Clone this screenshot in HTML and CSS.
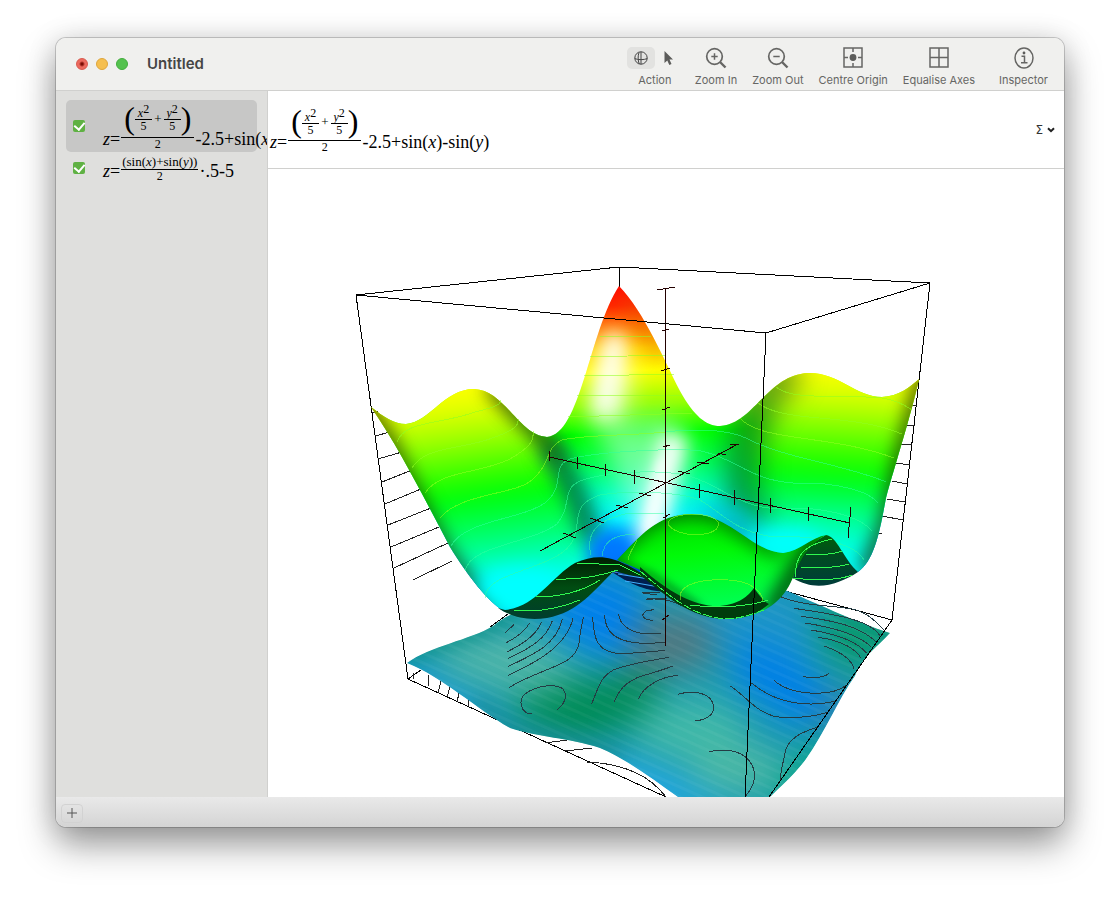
FILE: index.html
```html
<!DOCTYPE html>
<html lang="en">
<head>
<meta charset="utf-8">
<title>Untitled</title>
<link rel="stylesheet" href="styles.css">
</head>
<body>
<div class="window">
  <header class="titlebar">
    <div class="lights">
      <button class="light light-close" aria-label="Close"></button>
      <button class="light light-min" aria-label="Minimise"></button>
      <button class="light light-max" aria-label="Full screen"></button>
    </div>
    <h1 class="title">Untitled</h1>
    <div class="toolbar">
      <div class="tool tool-action">
        <div class="segments">
          <button class="segment segment-on" aria-label="Rotate">
            <svg width="16" height="16" viewBox="0 0 16 16"><circle cx="8" cy="8" r="6.2"/><path d="M1.8 8.6C5 10 11 10 14.2 8.6M8 1.8V14.2M6 2.5C4.8 6 4.8 10 6.2 14"/></svg>
          </button>
          <button class="segment" aria-label="Select">
            <svg width="16" height="16" viewBox="0 0 16 16"><path class="solid" d="M3.5 1V13L6.3 10.4L8.3 15L10.5 14L8.5 9.6H12Z"/></svg>
          </button>
        </div>
        <span>Action</span>
      </div>
      <button class="tool">
        <svg width="22" height="22" viewBox="0 0 22 22"><circle cx="9.500" cy="9.500" r="7.800" stroke-width="1.700"/><path d="M9.500 6.300V12.700M6.300 9.500H12.700" stroke-width="1.500"/><path d="M15 15L20.500 20.500" stroke-width="2.400"/></svg>
        <span>Zoom In</span>
      </button>
      <button class="tool">
        <svg width="22" height="22" viewBox="0 0 22 22"><circle cx="9.500" cy="9.500" r="7.800" stroke-width="1.700"/><path d="M6.300 9.500H12.700" stroke-width="1.500"/><path d="M15 15L20.500 20.500" stroke-width="2.400"/></svg>
        <span>Zoom Out</span>
      </button>
      <button class="tool">
        <svg width="22" height="22" viewBox="0 0 22 22"><rect x="2" y="1" width="18" height="19" stroke-width="1.500"/><path d="M11 1V5M11 16V20M2 10.500H6M16 10.500H20" stroke-width="1.500"/><circle class="solid" cx="11" cy="10.500" r="3.400"/></svg>
        <span>Centre Origin</span>
      </button>
      <button class="tool">
        <svg width="22" height="22" viewBox="0 0 22 22"><path d="M2 1H20V20H2ZM11 1V20M2 10.500H20" stroke-width="1.500"/></svg>
        <span>Equalise Axes</span>
      </button>
      <button class="tool tool-last">
        <svg width="22" height="22" viewBox="0 0 22 22"><ellipse cx="11" cy="11" rx="9" ry="10" stroke-width="1.500"/><circle class="solid" cx="11" cy="6" r="1.400"/><path d="M8.500 9.300H11.500V15.500M8 15.800H14.500" stroke-width="1.500"/></svg>
        <span>Inspector</span>
      </button>
    </div>
  </header>

  <div class="body">
    <aside class="sidebar">
      <ul class="equations">
        <li class="equation equation-on">
          <input class="tick" type="checkbox" checked aria-labelledby="eq1">
          <div class="formula" id="eq1"><span class="run"><i>z</i>=</span><span class="frac"><span class="num num-tall"><span class="paren">(</span><span class="frac small"><span class="num"><i>x</i><sup>2</sup></span><span class="den">5</span></span><span class="plus">+</span><span class="frac small"><span class="num"><i>y</i><sup>2</sup></span><span class="den">5</span></span><span class="paren">)</span></span><span class="den">2</span></span><span class="run">-2.5+sin(<i>x</i>)-sin(<i>y</i>)</span></div>
        </li>
        <li class="equation">
          <input class="tick" type="checkbox" checked aria-labelledby="eq2">
          <div class="formula" id="eq2"><span class="run"><i>z</i>=</span><span class="frac"><span class="num">(sin(<i>x</i>)+sin(<i>y</i>))</span><span class="den">2</span></span><span class="run">·.5-5</span></div>
        </li>
      </ul>
    </aside>

    <main class="content">
      <div class="editor">
        <div class="formula"><span class="run"><i>z</i>=</span><span class="frac"><span class="num num-tall"><span class="paren">(</span><span class="frac small"><span class="num"><i>x</i><sup>2</sup></span><span class="den">5</span></span><span class="plus">+</span><span class="frac small"><span class="num"><i>y</i><sup>2</sup></span><span class="den">5</span></span><span class="paren">)</span></span><span class="den">2</span></span><span class="run">-2.5+sin(<i>x</i>)-sin(<i>y</i>)</span></div>
        <button class="symbols" aria-label="Symbols"><span>Σ</span><svg width="8" height="6" viewBox="0 0 8 6"><path d="M1 1.200L4 4.200L7 1.200"/></svg></button>
      </div>

      <div class="plot">
      <svg class="graph" viewBox="268 169 796 628" preserveAspectRatio="xMidYMin slice" role="img" aria-label="Surface plot">
        <defs>
          <filter id="b3" filterUnits="userSpaceOnUse" x="268" y="169" width="796" height="700"><feGaussianBlur stdDeviation="4"/></filter>
          <filter id="b8" filterUnits="userSpaceOnUse" x="268" y="169" width="796" height="700"><feGaussianBlur stdDeviation="9"/></filter>
          <filter id="b12" filterUnits="userSpaceOnUse" x="268" y="169" width="796" height="700"><feGaussianBlur stdDeviation="13"/></filter>
          <filter id="b16" filterUnits="userSpaceOnUse" x="268" y="169" width="796" height="700"><feGaussianBlur stdDeviation="17"/></filter>
          <linearGradient id="gl" gradientUnits="userSpaceOnUse" x1="470" y1="385" x2="496" y2="605">
            <stop offset="0" stop-color="#ffff00"/><stop offset=".1" stop-color="#e4ff00"/><stop offset=".24" stop-color="#9cff00"/><stop offset=".4" stop-color="#38ff00"/><stop offset=".5" stop-color="#00ff08"/><stop offset=".7" stop-color="#00ff78"/><stop offset=".88" stop-color="#00ffe8"/><stop offset="1" stop-color="#00ffff"/>
          </linearGradient>
          <linearGradient id="gc" gradientUnits="userSpaceOnUse" x1="614" y1="286" x2="625" y2="570">
            <stop offset="0" stop-color="#ff0a00"/><stop offset=".07" stop-color="#ff2800"/><stop offset=".15" stop-color="#ff8000"/><stop offset=".22" stop-color="#ffd200"/><stop offset=".3" stop-color="#ffff00"/><stop offset=".42" stop-color="#90ff00"/><stop offset=".52" stop-color="#00ff00"/><stop offset=".64" stop-color="#00ff60"/><stop offset=".74" stop-color="#00ffc8"/><stop offset=".82" stop-color="#00f4ff"/><stop offset=".92" stop-color="#008cff"/><stop offset="1" stop-color="#0040d0"/>
          </linearGradient>
          <linearGradient id="gr" gradientUnits="userSpaceOnUse" x1="825" y1="372" x2="815" y2="562">
            <stop offset="0" stop-color="#ffff00"/><stop offset=".14" stop-color="#d0ff00"/><stop offset=".32" stop-color="#70ff00"/><stop offset=".53" stop-color="#00ff00"/><stop offset=".68" stop-color="#00ff60"/><stop offset=".85" stop-color="#00ffc8"/><stop offset="1" stop-color="#00ffff"/>
          </linearGradient>
          <linearGradient id="gh" gradientUnits="userSpaceOnUse" x1="690" y1="514" x2="700" y2="612">
            <stop offset="0" stop-color="#00d000"/><stop offset=".15" stop-color="#00e800"/><stop offset=".4" stop-color="#00fa08"/><stop offset="1" stop-color="#00ff58"/>
          </linearGradient>
          <linearGradient id="gd" gradientUnits="userSpaceOnUse" x1="0" y1="556" x2="0" y2="620">
            <stop offset="0" stop-color="#001c00"/><stop offset=".5" stop-color="#004d12"/><stop offset="1" stop-color="#003c30"/>
          </linearGradient>
          <linearGradient id="gk" gradientUnits="userSpaceOnUse" x1="0" y1="535" x2="0" y2="588">
            <stop offset="0" stop-color="#006008"/><stop offset=".4" stop-color="#004c20"/><stop offset="1" stop-color="#003a3c"/>
          </linearGradient>
          <path id="back" d="M371 407C384 417 394 424 406 424C430 422 444 389 474 389C505 390 519 436 547 437C581 434 589 332 619 286C645 313 664 360 680 391C694 416 706 426 720 426C754 424 767 375 808 373C838 372 856 397 882 397C899 396 910 387 919 379C912 412 895 465 886 498C880 530 875 560 858 572L826 553L740 600L614 572L505 612C488 602 468 576 450 547C425 500 400 449 371 407Z"/>
          <clipPath id="backclip"><use href="#back"/></clipPath>
          <path id="floor" d="M407 663C430 646 470 640 493 626C500 620 506 617 512 614L600 580L614 572L660 590L785 590C810 600 855 622 890 633C876 648 862 657 855 676C838 700 825 732 806 759C795 774 780 787 770 797H678C655 781 630 761 600 748C567 737 540 738 510 728C475 708 444 678 407 663Z"/>
          <clipPath id="floorclip"><use href="#floor"/></clipPath>
          <path id="hump" d="M617 560C640 536 657 514 692 514C731 515 753 552 783 553C800 551 812 537 826 535C800 550 798 570 789 586C780 602 763 617 728 619C687 616 664 588 640 570Z"/>
          <clipPath id="humpclip"><use href="#hump"/></clipPath>
          <pattern id="facets" width="18" height="9" patternUnits="userSpaceOnUse" patternTransform="rotate(24)"><rect width="18" height="3" fill="#fff" opacity=".04"/></pattern>
        </defs>

        <g class="box">
          <path d="M356 295L619 267L930 283L766 333"/>
          <path d="M619 267V290M356 295L408 679L666 797M930 283L892 620L785 591M408 679L421 670M490 627L508 614"/>
        </g>
        <g class="stub">
          <path d="M372 413L378 411M375 436L390 432M378 459L402 452M382 482L412 470M385 504L421 489M388 525L431 508M391 547L439 527M394 568L448 543M413 580L452 561"/>
          <path d="M908 405H917M904 425H915M900 444L912 445M896 463L910 465M892 481L907 484M887 499L905 502M882 516L903 520M877 533H882"/>
          <path d="M414 679L413 673M428 686L429 675M438 693L441 681M447 697L450 687M457 702L459 693M468 706L469 700M545 743L567 740M565 751L592 748M587 762C610 763 645 769 666 797"/>
        </g>

        <g clip-path="url(#floorclip)">
          <use href="#floor" fill="#1c9bb0"/>
          <g filter="url(#b16)">
            <path d="M430 640L530 630L590 680L550 705L450 675Z" fill="#4cb4a8"/>
            <path d="M380 670L440 705L500 745" stroke="#1a9ce0" stroke-width="34" fill="none"/>
            <path d="M545 590L620 570L660 625L610 660L565 640Z" fill="#0080ea"/>
            <path d="M640 615H720L710 665L620 680Z" fill="#507880"/>
            <path d="M530 726L500 708L570 680L660 672L655 715L580 745Z" fill="#008c58"/>
            <path d="M690 605L790 590L840 620L800 660L720 640Z" fill="#1c94c8"/>
            <path d="M730 640L790 650L845 705L800 730L735 685Z" fill="#0080e6"/>
            <ellipse cx="690" cy="730" rx="56" ry="30" fill="#40b8a8"/>
            <path d="M570 750L660 770L740 810H640Z" fill="#22a8e8"/>
            <ellipse cx="738" cy="770" rx="48" ry="24" fill="#4cb8a4"/>
            <path d="M810 605L920 618L862 675L825 650Z" fill="#08986c"/>
            <path d="M842 690L822 730" stroke="#3c78a0" stroke-width="20"/>
            <path d="M835 745L785 807" stroke="#00a880" stroke-width="32"/>
          </g>
          <path d="M400 660C430 640 470 636 495 622L520 606" stroke="#088f7c" stroke-opacity=".8" stroke-width="14" fill="none" filter="url(#b8)"/>
          <path d="M475 702L510 730L570 740L620 755" stroke="#188b90" stroke-width="12" fill="none" filter="url(#b8)"/>
          <rect x="400" y="560" width="500" height="240" fill="url(#facets)"/>
        </g>
        <g class="contour" transform="translate(350 500) scale(.33333)">
          <path d="M465 398L493 373M469 428C500 412 525 395 538 370M472 455C515 434 560 405 574 367M474 476C545 442 590 415 607 362M475 499C560 460 620 430 637 358M475 526C570 482 650 435 669 355M478 562C580 500 675 500 687 430C690 400 695 375 700 352M728 350C730 420 745 458 810 461C850 460 880 457 945 451M764 344C764 390 790 432 900 430L945 427M806 342C808 375 845 402 900 402H932M545 642C510 640 505 600 525 582C560 555 620 550 640 568C655 590 640 615 622 629M724 613C745 570 745 535 790 510C840 490 900 482 958 472M793 605C810 560 840 535 900 521C930 512 950 505 970 498M866 596C880 560 930 530 985 526M880 279L920 285M888 298L950 295M912 329L890 332C868 345 880 360 910 361"/>
        </g>
        <g class="contour" transform="translate(640 500) scale(.33333)">
          <path d="M20 297C65 295 100 302 122 316M5 277H60M422 290C490 320 580 315 640 328C690 340 710 370 732 390M462 325C560 340 690 355 720 408M484 349C590 363 660 380 708 425M496 369C600 386 665 410 694 442M513 390C600 404 655 430 680 459M535 412C610 422 650 450 663 475M552 438C600 455 636 475 642 508M489 530C525 535 555 532 566 520M402 541C450 585 570 594 620 555M335 549C400 605 490 625 585 604M271 558C320 590 340 630 405 650C460 656 510 652 560 638M530 682C490 695 440 715 435 760C430 790 422 805 421 840M114 583C155 570 220 575 221 625C220 645 195 663 165 661M207 754L245 751C300 747 344 780 344 830C342 855 330 873 316 889"/>
        </g>

        <g clip-path="url(#backclip)">
          <rect x="360" y="280" width="570" height="340" fill="url(#gc)"/>
          <path d="M340 360H490L545 430L588 520L600 620H340Z" fill="url(#gl)" filter="url(#b8)"/>
          <path d="M775 350H950V610H760L735 500Z" fill="url(#gr)" filter="url(#b12)"/>
          <path d="M548 445L578 495L592 535" stroke="#00906a" stroke-opacity=".6" stroke-width="24" fill="none" filter="url(#b8)"/>
          <path d="M495 386L530 425L560 465L578 503L592 540" stroke="#003820" stroke-opacity=".5" stroke-width="15" fill="none" filter="url(#b8)"/>
          <path d="M488 384L520 415L545 435L562 460" stroke="#102c00" stroke-opacity=".6" stroke-width="12" fill="none" filter="url(#b8)"/>
          <path d="M362 400L388 442L416 500L446 555L490 612" stroke="#1c2c00" stroke-opacity=".75" stroke-width="17" fill="none" filter="url(#b8)"/>
          <path d="M790 364L758 405L744 450L742 495L756 525" stroke="#004c20" stroke-opacity=".5" stroke-width="38" fill="none" filter="url(#b12)"/>
          <path d="M926 372L902 460L887 525L866 574" stroke="#182c00" stroke-opacity=".75" stroke-width="18" fill="none" filter="url(#b8)"/>
          <path d="M690 505L740 505L775 540L720 540Z" fill="#00c0d0" fill-opacity=".7" filter="url(#b8)"/>
          <path d="M612 325L594 380L592 425L620 428L632 380Z" fill="#fff" opacity=".7" filter="url(#b12)"/>
          <path d="M616 335L603 414" stroke="#fff" stroke-width="18" stroke-opacity=".95" filter="url(#b8)"/>
          <path d="M595 425L668 415L690 444L655 552L630 515L618 477Z" fill="#d8fff4" opacity=".5" filter="url(#b12)"/>
          <path d="M674 436L646 550" stroke="#fff" stroke-width="24" filter="url(#b8)"/>
          <path d="M662 460L648 530" stroke="#fff" stroke-width="8" stroke-opacity=".6" filter="url(#b3)"/>
          <path d="M626 296L662 358" stroke="#e06000" stroke-opacity=".5" stroke-width="10" filter="url(#b8)"/>
          <ellipse cx="612" cy="550" rx="22" ry="18" fill="#0078ff" filter="url(#b8)"/>
          <ellipse cx="520" cy="588" rx="43" ry="20" fill="#00ffff" filter="url(#b8)"/>
          <ellipse cx="785" cy="542" rx="38" ry="13" fill="#00ffff" filter="url(#b8)"/>
        </g>

        <g class="lime">
          <path d="M397 442C405 420 440 425 475 412C490 408 501 406 501 400M412 468C425 445 465 450 495 437C515 430 519 425 518 419M425 493C440 470 480 474 510 459C532 446 534 440 533 431M440 518C460 493 515 495 532 480C552 463 545 447 562 440C590 434 630 436 665 432M600 337L652 336M590 357L666 355M584 376L675 374M577 396L684 395M568 417L692 413M776 387C792 401 840 394 882 398C895 400 905 405 912 410M758 403C785 424 850 412 902 434M740 418C760 442 830 434 894 458"/>
        </g>
        <g class="mint">
          <path d="M451 546C465 520 520 520 545 503C567 485 550 466 570 459C600 451 690 447 705 452C740 460 755 487 815 483C850 486 870 493 878 503M665 432C710 427 735 432 750 440C785 458 850 466 886 482M465 571C470 545 530 544 557 524C575 502 557 485 590 478C620 470 670 470 692 477C725 487 745 515 800 508C840 510 863 520 872 531M485 598C485 570 560 570 573 540C582 520 570 505 600 495C630 490 680 492 700 500C725 515 735 532 775 537C820 535 855 544 864 560M591 555C585 530 600 520 625 514L665 513M602 556C604 540 615 535 635 534"/>
        </g>

        <path d="M505 610C536 607 552 576 575 563C604 550 622 560 655 582L614 571C593 591 579 612 547 618C525 621 510 616 498 608Z" fill="url(#gd)"/>
        <path d="M612 572L652 579L675 591C652 594 633 586 612 572Z" fill="#001e50"/>
        <g class="green"><path d="M577 563L620 565L650 580M556 579C580 580 600 576 618 570M536 597C560 597 583 591 600 580M514 610C540 613 563 607 580 600"/></g>
        <path class="blue" d="M618 574L655 580M625 581L665 588"/>
        <path d="M796 553L826 535C837 536 844 560 858 572C838 585 815 592 793 578Z" fill="url(#gk)"/>
        <g clip-path="url(#humpclip)">
          <use href="#hump" fill="url(#gh)"/>
          <path d="M610 562C636 530 657 509 692 509C731 510 753 549 783 550" fill="none" stroke="#002800" stroke-opacity=".65" stroke-width="13" filter="url(#b8)"/>
          <path d="M820 530L797 570L770 616" stroke="#002800" stroke-opacity=".85" stroke-width="18" fill="none" filter="url(#b8)"/>
          <path d="M610 560L650 575L700 608" stroke="#002800" stroke-opacity=".5" stroke-width="7" fill="none" filter="url(#b3)"/>
        </g>
        <path d="M640 567C670 593 695 607 720 606C740 604 748 596 754 588C759 595 763 601 769 604C755 616 740 619 725 619C690 618 665 595 640 575Z" fill="#003c0c"/>
        <g class="lime"><path d="M668 524C667 513 710 510 718 522C723 538 676 539 668 524M681 600C673 578 730 576 748 584C760 590 764 598 762 602M628 560C629 553 634 547 637 540"/></g>
        <g class="green">
          <path d="M690 605C720 609 750 606 768 600M795 577C796 560 798 546 832 539M806 555C820 555 835 554 842 551M801 567C820 568 838 568 849 564M793 578C815 581 840 580 852 575"/>
          <path class="dash" d="M640 571C665 592 690 616 725 619C740 619 752 614 764 610"/>
        </g>

        <g class="axis">
          <path d="M549 457L850 523M577 457V469M605 464V476M634 470V484M699 484V498M734 490V505M770 498V513M808 507V521M851 507L848 538M549 451V461M540 551L738 444M563 533L576 538M590 518L604 523M616 505L628 508M639 493L651 496M678 471L690 474M697 462L709 464M718 453L726 455M730 444H739"/>
          <path d="M665 288V646M657 290L675 287M662 331L669 329M661 371L670 368M662 410L670 407M663 447L670 445M663 518L670 514M662 620L669 615"/>
        </g>
        <g class="box"><path d="M356 295L766 333L745 797M892 620L769 797"/></g>
      </svg>
      </div>
    </main>
  </div>
  <footer class="footer"><button class="add" aria-label="Add equation"><svg width="12" height="12" viewBox="0 0 12 12"><path d="M6 1V11M1 6H11"/></svg></button></footer>
</div>
</body>
</html>
```
FILE: styles.css
```css
* { box-sizing: border-box; }
body {
  margin: 0;
  padding: 38px 56px 74px;
  min-height: 100vh;
  display: flex;
  background: #fff;
  font-family: Inter, "Liberation Sans", sans-serif;
  overflow: hidden;
}
button { border: 0; padding: 0; background: none; font: inherit; color: inherit; }
.window {
  flex: 1;
  min-width: 0;
  display: flex;
  flex-direction: column;
  border-radius: 10px;
  overflow: hidden;
  background: #fff;
  box-shadow: 0 0 0 1px rgba(0, 0, 0, .18), 0 18px 36px rgba(0, 0, 0, .38), 0 2px 30px rgba(0, 0, 0, .14);
}
.titlebar {
  display: flex;
  align-items: center;
  height: 53px;
  padding: 0 16px 0 20px;
  background: #f0f0ee;
  border-bottom: 1px solid #d0d0ce;
}
.lights { display: flex; gap: 8px; }
.light { width: 12px; height: 12px; border-radius: 50%; }
.light-close { background: radial-gradient(circle, #7c0c04 1px, #ec6a5e 3px); border: 1px solid #d9584c; }
.light-min { background: #f5bf4f; border: 1px solid #dfa63c; }
.light-max { background: #54c24e; border: 1px solid #43ad3d; }
.title { margin: 0 auto 0 19px; font-size: 15px; line-height: 20px; font-weight: 600; color: #464645; }
.toolbar { display: flex; gap: 15px; padding-top: 6px; color: #666664; }
.tool { display: flex; flex-direction: column; align-items: center; gap: 3px; font-size: 11px; line-height: 16px; white-space: nowrap; }
.tool svg { fill: none; stroke: #666664; }
.tool .solid { fill: #5c5c5a; stroke: none; }
.tool-last { margin-left: 9px; }
.tool-action { margin-right: -3px; }
.segments { display: flex; height: 22px; }
.segment { width: 28px; height: 22px; border-radius: 5px; display: grid; place-items: center; }
.segment svg { stroke: #444; }
.segment-on { background: #e2e2e0; }
.body { flex: 1; display: flex; min-height: 0; }
.sidebar { width: 212px; flex: none; overflow: hidden; padding: 9px 10px; background: #dfdfdd; border-right: 1px solid #d0d0ce; }
.equations { list-style: none; margin: 0; padding: 0; }
.equation { display: flex; align-items: center; gap: 18px; height: 32px; padding-left: 7px; border-radius: 5px; }
.equation-on { height: 52px; background: #c7c7c6; }
.tick { appearance: none; flex: none; display: grid; place-items: center; width: 12px; height: 12px; margin: 0; border-radius: 2px; background: #5fb143; }
.tick::after {
  content: "";
  width: 5px;
  height: 8px;
  margin-bottom: 2px;
  border: solid #fff;
  border-width: 0 2px 2px 0;
  transform: rotate(40deg);
}
.formula { display: flex; align-items: flex-end; font-family: "Liberation Serif", serif; color: #000; white-space: nowrap; }
.run { font-size: 18px; line-height: 20px; margin-bottom: 1px; }
.frac { display: flex; flex-direction: column; align-items: stretch; text-align: center; margin: 0 1px; }
.num { padding: 0 1px; border-bottom: 1px solid #000; font-size: 13px; line-height: 14px; }
.den { font-size: 12px; line-height: 12px; }
.num-tall { display: flex; align-items: center; padding: 0 3px 2px; }
.paren { font-size: 32px; line-height: 30px; height: 32px; }
.small { margin: 0; }
.small .num { padding: 0 3px; font-size: 12px; line-height: 16px; height: 15px; }
.small sup { font-size: 12px; line-height: 0; vertical-align: 4px; }
.plus { font-size: 13px; padding: 0 2px; }
.content { flex: 1; min-width: 0; display: flex; flex-direction: column; background: #fff; }
.editor { display: flex; align-items: center; justify-content: space-between; height: 78px; padding: 0 9px 0 2px; border-bottom: 1px solid #d0d0ce; }
.symbols { display: flex; align-items: center; gap: 4px; font-family: "DejaVu Sans", sans-serif; font-size: 12px; color: #333; }
.symbols svg { fill: none; stroke: #222; stroke-width: 2; }
.plot { flex: 1; min-height: 0; position: relative; overflow: hidden; }
.graph { position: absolute; inset: 0; width: 100%; height: 100%; }
.graph filter { color-interpolation-filters: sRGB; }
.box, .axis, .stub, .contour, .lime, .mint, .green { fill: none; stroke-width: 1; shape-rendering: crispEdges; }
.box { stroke: #000; }
.axis { stroke: #200; }
.stub { stroke: #222; }
.contour { stroke: #243c44; }
.contour path { vector-effect: non-scaling-stroke; }
.lime { stroke: #90ff20; stroke-opacity: .55; }
.mint { stroke: #30ffa0; stroke-opacity: .5; }
.green { stroke: #30f850; }
.blue { fill: none; stroke: #40b0ff; }
.dash { stroke-dasharray: 9 2; }
.footer { display: flex; align-items: center; height: 30px; padding: 2px 0 0 5px; background: linear-gradient(#e9e9e9, #d4d4d4); }
.add { width: 22px; height: 19px; display: grid; place-items: center; border: 1px solid #d2d2d2; border-radius: 4px; }
.add svg { stroke: #555; }
```
